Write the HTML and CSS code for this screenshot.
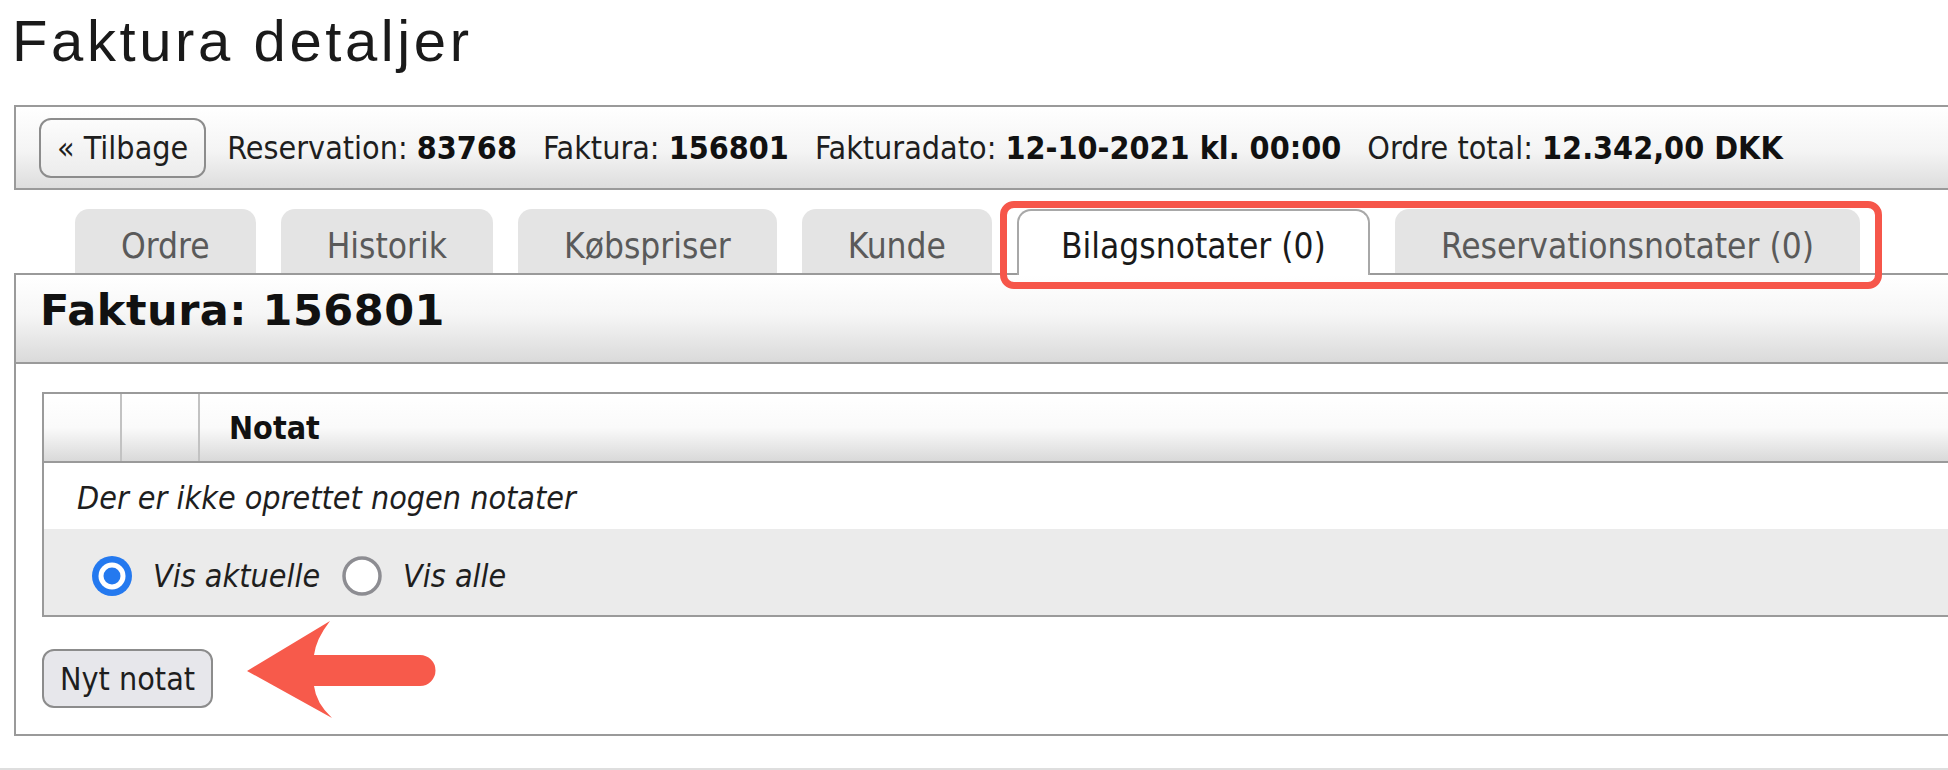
FILE: index.html
```html
<!DOCTYPE html>
<html lang="da">
<head>
<meta charset="utf-8">
<title>Faktura detaljer</title>
<link rel="stylesheet" href="styles.css">
</head>
<body>
<div class="page">
  <h1 class="title">Faktura detaljer</h1>

  <div class="infobar">
    <button class="btn btn-back">« Tilbage</button>
    <div class="info">
      <span class="item">Reservation: <b>83768</b></span>
      <span class="item">Faktura: <b>156801</b></span>
      <span class="item">Fakturadato: <b>12-10-2021 kl. 00:00</b></span>
      <span class="item">Ordre total: <b>12.342,00 DKK</b></span>
    </div>
  </div>

  <div class="tabs">
    <div class="tab">Ordre</div>
    <div class="tab">Historik</div>
    <div class="tab">Købspriser</div>
    <div class="tab">Kunde</div>
    <div class="tab active">Bilagsnotater (0)</div>
    <div class="tab">Reservationsnotater (0)</div>
    <div class="highlight"></div>
  </div>

  <div class="panel">
    <div class="panel-head">Faktura: 156801</div>
    <div class="panel-body">
      <div class="notes">
        <div class="notes-head">
          <div class="col col1"></div>
          <div class="col col2"></div>
          <div class="col col3">Notat</div>
        </div>
        <div class="row-empty">Der er ikke oprettet nogen notater</div>
        <div class="row-filter">
          <label class="radio">
            <svg class="radio-icon" viewBox="0 0 40 40" width="40" height="40"><circle cx="20" cy="20" r="20" fill="#2479ef"/><circle cx="20" cy="20" r="13.5" fill="#fff"/><circle cx="20" cy="20" r="8.5" fill="#2479ef"/></svg>
            <span>Vis aktuelle</span>
          </label>
          <label class="radio">
            <svg class="radio-icon" viewBox="0 0 40 40" width="40" height="40"><circle cx="20" cy="20" r="18" fill="#fff" stroke="#8d8d92" stroke-width="3.5"/></svg>
            <span>Vis alle</span>
          </label>
        </div>
      </div>
      <div class="actions">
        <button class="btn btn-new">Nyt notat</button>
        <svg class="arrow" viewBox="0 0 200 100" width="200" height="100">
          <path d="M5 52 L88 2 Q74 20 72 36 L178 36 A15.5 15.5 0 0 1 178 67 L72 67 Q74 84 90 99 Z" fill="#f75a4b"/>
        </svg>
      </div>
    </div>
  </div>
</div>
<div class="footer-line"></div>
</body>
</html>
```

FILE: styles.css
```css
html, body {
  margin: 0;
  padding: 0;
  background: #fff;
  overflow: hidden;
}

body {
  font-family: "DejaVu Sans Condensed", "DejaVu Sans", sans-serif;
  font-stretch: condensed;
  color: #1e1e1e;
}

.page {
  padding-left: 14px;
  width: 2100px;
}

.title {
  font-family: "Liberation Sans", Arial, sans-serif;
  font-stretch: normal;
  font-weight: normal;
  font-size: 58px;
  line-height: 66px;
  letter-spacing: 3.6px;
  margin: 8px 0 0 -2px;
  color: #1a1a1a;
}

.infobar {
  margin-top: 31px;
  height: 85px;
  box-sizing: border-box;
  border: 2px solid #9a9a9a;
  border-right: none;
  background: linear-gradient(#ffffff, #f4f4f4 55%, #dddddd);
  display: flex;
  align-items: center;
  padding-left: 23px;
  gap: 21px;
  font-size: 32px;
}

.btn {
  font-family: inherit;
  font-stretch: condensed;
  font-size: 32px;
  color: #1e1e1e;
  padding: 0 16px;
  border: 2px solid #8c8c8c;
  border-radius: 12px;
  cursor: pointer;
}

.btn-back {
  height: 60px;
  background: linear-gradient(#fcfcfc, #ececec);
}

.info {
  display: flex;
  gap: 26px;
  white-space: nowrap;
}

.info b {
  font-weight: bold;
  color: #111;
}

.tabs {
  position: relative;
  display: flex;
  align-items: flex-start;
  gap: 25px;
  margin-top: 19px;
  padding-left: 61px;
  height: 64px;
}

.tab {
  height: 64px;
  box-sizing: border-box;
  padding: 10px 46px 0;
  line-height: 54px;
  font-size: 35px;
  color: #5a5a5a;
  background: #e4e4e4;
  border-radius: 14px 14px 0 0;
  white-space: nowrap;
}

.tab.active {
  position: relative;
  z-index: 1;
  height: 66px;
  margin-bottom: -2px;
  padding: 8px 42px 0;
  background: #fff;
  color: #1a1a1a;
  border: 2px solid #a8a8a8;
  border-bottom: none;
}

.highlight {
  position: absolute;
  left: 986px;
  top: -8px;
  width: 882px;
  height: 88px;
  box-sizing: border-box;
  border: 7px solid #f6564a;
  border-radius: 14px;
  z-index: 2;
}

.panel {
  border: 2px solid #9a9a9a;
  border-right: none;
}

.panel-head {
  height: 89px;
  box-sizing: border-box;
  padding: 10px 0 0 24px;
  font-family: "DejaVu Sans", sans-serif;
  font-stretch: normal;
  font-size: 43px;
  font-weight: bold;
  line-height: 50px;
  letter-spacing: 0.5px;
  color: #111;
  border-bottom: 2px solid #9a9a9a;
  background: linear-gradient(#ffffff, #f6f6f6 45%, #dadada);
}

.panel-body {
  padding: 28px 0 26px 26px;
}

.notes {
  border: 2px solid #9a9a9a;
  border-right: none;
}

.notes-head {
  display: flex;
  height: 69px;
  box-sizing: border-box;
  border-bottom: 2px solid #9a9a9a;
  background: linear-gradient(#ffffff, #fafafa 50%, #d9d9d9);
}

.col {
  display: flex;
  align-items: center;
  box-sizing: border-box;
}

.col1,
.col2 {
  width: 78px;
  border-right: 2px solid #c2c2c2;
}

.col3 {
  padding-left: 29px;
  font-weight: bold;
  font-size: 32px;
  color: #111;
}

.row-empty {
  height: 66px;
  box-sizing: border-box;
  display: flex;
  align-items: center;
  padding: 4px 0 0 33px;
  font-style: italic;
  font-size: 32px;
  color: #1e1e1e;
}

.row-filter {
  height: 86px;
  box-sizing: border-box;
  display: flex;
  align-items: center;
  gap: 22px;
  padding: 8px 0 0 48px;
  background: #ebebeb;
  font-style: italic;
  font-size: 32px;
}

.radio {
  display: flex;
  align-items: center;
  gap: 21px;
}

.radio-icon {
  display: block;
}

.actions {
  position: relative;
  margin-top: 32px;
  height: 59px;
}

.btn-new {
  height: 59px;
  background: #e7e7eb;
}

.arrow {
  position: absolute;
  left: 200px;
  top: -30px;
}

.footer-line {
  margin-top: 32px;
  height: 2px;
  background: #dedede;
}
```
